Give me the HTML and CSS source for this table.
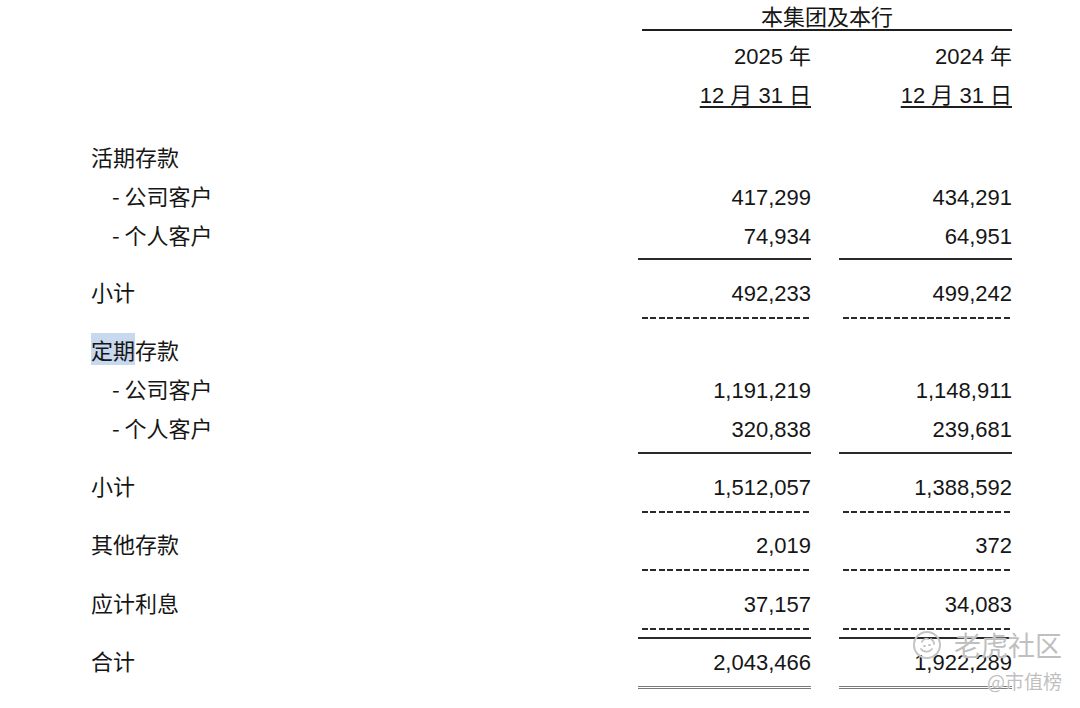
FILE: index.html
```html
<!DOCTYPE html>
<html lang="zh-CN">
<head>
<meta charset="utf-8">
<title>存款</title>
<link rel="stylesheet" href="styles.css">
</head>
<body>
<div class="sheet">
  <div class="row head-title">
    <div></div>
    <div class="title">本集团及本行</div>
  </div>
  <div class="row year">
    <div></div>
    <div class="num">2025 年</div>
    <div class="num">2024 年</div>
  </div>
  <div class="row date">
    <div></div>
    <div class="num"><span class="ul">12 月 31 日</span></div>
    <div class="num"><span class="ul">12 月 31 日</span></div>
  </div>

  <div class="row first">
    <div class="label">活期存款</div><div></div><div></div>
  </div>
  <div class="row">
    <div class="label sub">- 公司客户</div><div class="num">417,299</div><div class="num">434,291</div>
  </div>
  <div class="row">
    <div class="label sub">- 个人客户</div><div class="num">74,934</div><div class="num">64,951</div>
  </div>
  <div class="row sep sep-solid-a">
    <div></div><div class="solid"></div><div class="solid"></div>
  </div>
  <div class="row">
    <div class="label">小计</div><div class="num">492,233</div><div class="num">499,242</div>
  </div>
  <div class="row sep sep-dash">
    <div></div><div class="dashed"></div><div class="dashed"></div>
  </div>

  <div class="row">
    <div class="label"><span class="hl">定期</span>存款</div><div></div><div></div>
  </div>
  <div class="row">
    <div class="label sub">- 公司客户</div><div class="num">1,191,219</div><div class="num">1,148,911</div>
  </div>
  <div class="row">
    <div class="label sub">- 个人客户</div><div class="num">320,838</div><div class="num">239,681</div>
  </div>
  <div class="row sep sep-solid-b">
    <div></div><div class="solid"></div><div class="solid"></div>
  </div>
  <div class="row">
    <div class="label">小计</div><div class="num">1,512,057</div><div class="num">1,388,592</div>
  </div>
  <div class="row sep sep-dash">
    <div></div><div class="dashed"></div><div class="dashed"></div>
  </div>

  <div class="row">
    <div class="label">其他存款</div><div class="num">2,019</div><div class="num">372</div>
  </div>
  <div class="row sep sep-dash tall">
    <div></div><div class="dashed"></div><div class="dashed"></div>
  </div>

  <div class="row">
    <div class="label">应计利息</div><div class="num">37,157</div><div class="num">34,083</div>
  </div>
  <div class="row sep sep-total">
    <div></div>
    <div class="stack"><div class="dashed"></div><div class="solid"></div></div>
    <div class="stack"><div class="dashed"></div><div class="solid"></div></div>
  </div>

  <div class="row">
    <div class="label">合计</div><div class="num">2,043,466</div><div class="num">1,922,289</div>
  </div>
  <div class="row sep sep-double">
    <div></div><div class="double"></div><div class="double"></div>
  </div>
</div>

<div class="watermark">
  <div class="wm-top">
    <svg class="wm-logo" width="30" height="30" viewBox="0 0 30 30" aria-hidden="true">
      <circle cx="15" cy="15" r="13" fill="none" stroke="#c4c4c4" stroke-width="2"/>
      <path d="M9 19c2 3 8 4 11 0M10 12c1-3 4-4 6-3M19 9c2 1 3 3 3 5M12 16h1M17 15h1" fill="none" stroke="#c4c4c4" stroke-width="1.8" stroke-linecap="round"/>
    </svg>
    <span class="wm-name">老虎社区</span>
  </div>
  <div class="wm-sub">@市值榜</div>
</div>
</body>
</html>
```

FILE: styles.css
```css
html, body {
  margin: 0;
  padding: 0;
  background: #ffffff;
}

body {
  width: 1080px;
  height: 708px;
  overflow: hidden;
  position: relative;
  font-family: "Liberation Sans", "Noto Sans CJK SC", sans-serif;
  font-size: 22px;
  color: #161616;
}

.sheet {
  display: flex;
  flex-direction: column;
  padding-left: 92px;
}

.row {
  display: grid;
  grid-template-columns: 518px 172px 172px;
  column-gap: 29px;
  height: 39px;
  line-height: 39px;
  align-items: stretch;
}

.label {
  font-family: "Noto Sans CJK SC", "Liberation Sans", sans-serif;
  white-space: nowrap;
  margin-left: -1px;
  line-height: 35px;
}

.label.sub {
  padding-left: 21px;
}

.hl {
  background: #c8d8ee;
}

.num {
  text-align: right;
  white-space: nowrap;
}

.head-title {
  height: 31px;
  line-height: 26px;
}

.title {
  grid-column: 2 / 4;
  margin-left: 3px;
  padding-top: 2px;
  text-align: center;
  border-bottom: 2px solid #1e1e1e;
  height: 27px;
  font-family: "Noto Sans CJK SC", sans-serif;
}

.year {
  margin-top: 6px;
}

.ul {
  text-decoration: underline;
  text-decoration-thickness: 2px;
  text-underline-offset: 3px;
  text-decoration-color: #1e1e1e;
}

.first {
  margin-top: 24px;
}

.sep {
  line-height: normal;
}

.sep-solid-a {
  height: 18px;
  padding-top: 2px;
  box-sizing: border-box;
}

.sep-solid-b {
  height: 19px;
  padding-top: 3px;
  box-sizing: border-box;
}

.sep-dash {
  height: 19px;
  padding-top: 4px;
  box-sizing: border-box;
}

.sep-dash.tall {
  height: 20px;
}

.sep-total {
  height: 19px;
  padding-top: 4px;
  box-sizing: border-box;
}

.sep-double {
  height: 20px;
  padding-top: 4px;
  box-sizing: border-box;
}

.solid {
  height: 2px;
  background: #2a2a2a;
  margin-left: -1px;
}

.dashed {
  height: 2px;
  margin-left: 3px;
  background: repeating-linear-gradient(to right, #2a2a2a 0 6px, transparent 6px 8.45px);
}

.stack {
  display: flex;
  flex-direction: column;
  gap: 7px;
}

.double {
  height: 1px;
  border-top: 1px solid #7a7a7a;
  border-bottom: 1px solid #7a7a7a;
  margin-left: -1px;
}

.watermark {
  position: absolute;
  left: 904px;
  top: 628px;
  display: flex;
  flex-direction: column;
  align-items: flex-end;
  width: 158px;
  color: rgba(170, 170, 170, 0.75);
  font-family: "Noto Sans CJK SC", sans-serif;
  text-shadow: 0 0 1px #ffffff, 0 0 1px #ffffff;
}

.wm-top {
  display: flex;
  align-items: center;
  gap: 12px;
  height: 34px;
}

.wm-logo {
  display: block;
}

.wm-name {
  font-size: 27px;
  line-height: 34px;
}

.wm-sub {
  font-size: 19px;
  line-height: 26px;
  margin-top: 6px;
}
```
